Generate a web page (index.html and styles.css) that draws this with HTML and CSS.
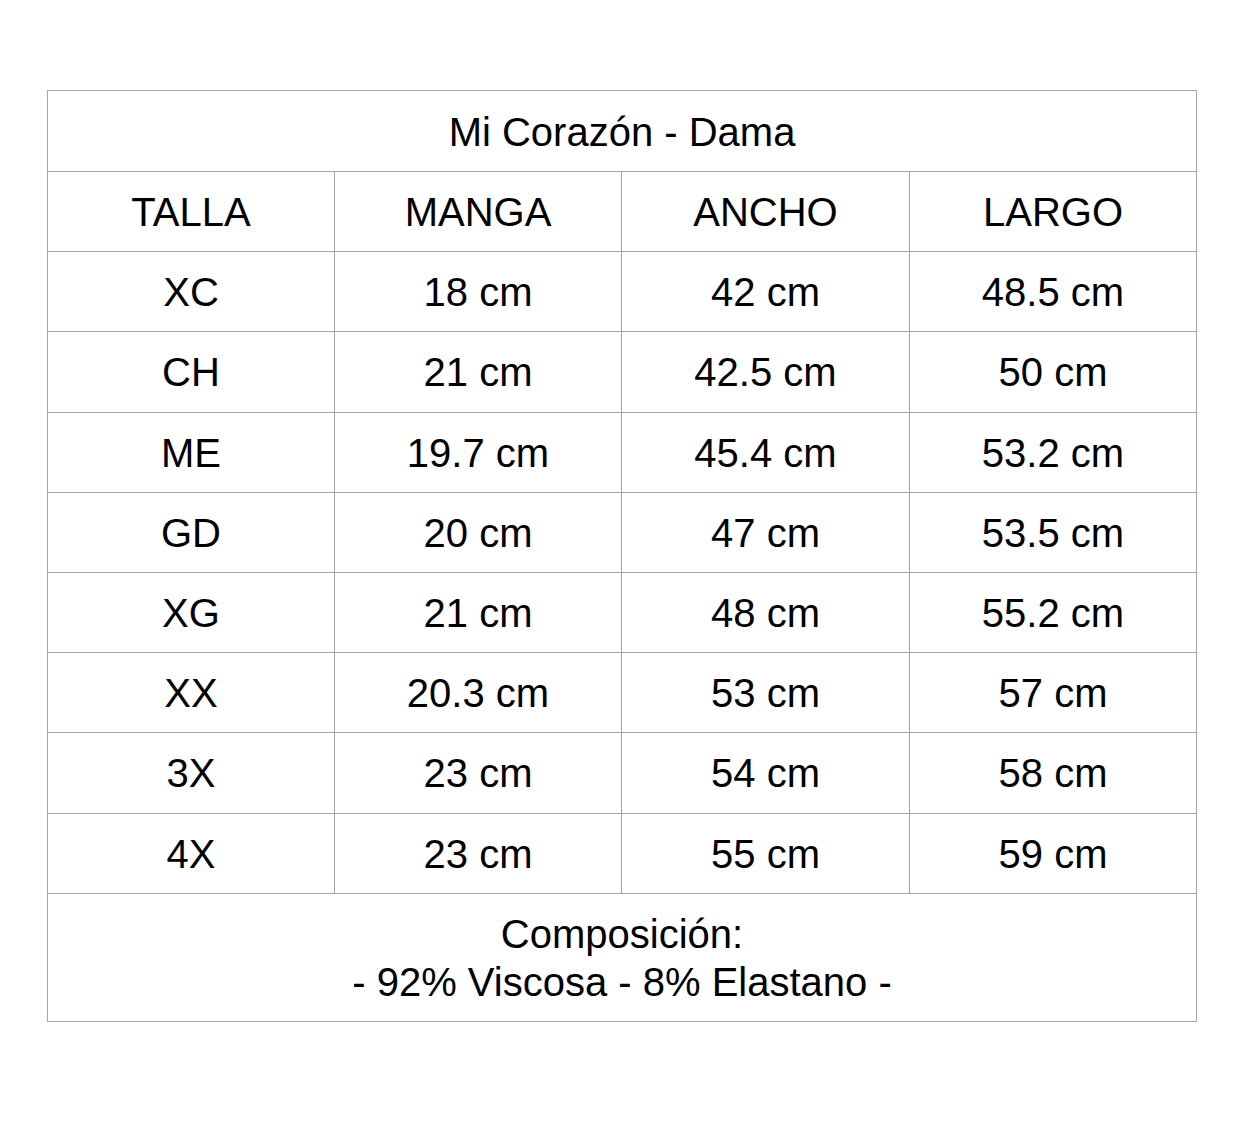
FILE: index.html
```html
<!DOCTYPE html>
<html lang="es">
<head>
<meta charset="utf-8">
<title>Mi Corazón - Dama</title>
<link rel="stylesheet" href="styles.css">
</head>
<body>
<div class="page">
<table class="sizes">
  <colgroup><col class="c1"><col class="c2"><col class="c3"><col class="c4"></colgroup>
  <tr class="title"><td colspan="4">Mi Corazón - Dama</td></tr>
  <tr class="row"><td>TALLA</td><td>MANGA</td><td>ANCHO</td><td>LARGO</td></tr>
  <tr class="row"><td>XC</td><td>18 cm</td><td>42 cm</td><td>48.5 cm</td></tr>
  <tr class="row"><td>CH</td><td>21 cm</td><td>42.5 cm</td><td>50 cm</td></tr>
  <tr class="row"><td>ME</td><td>19.7 cm</td><td>45.4 cm</td><td>53.2 cm</td></tr>
  <tr class="row"><td>GD</td><td>20 cm</td><td>47 cm</td><td>53.5 cm</td></tr>
  <tr class="row"><td>XG</td><td>21 cm</td><td>48 cm</td><td>55.2 cm</td></tr>
  <tr class="row"><td>XX</td><td>20.3 cm</td><td>53 cm</td><td>57 cm</td></tr>
  <tr class="row"><td>3X</td><td>23 cm</td><td>54 cm</td><td>58 cm</td></tr>
  <tr class="row"><td>4X</td><td>23 cm</td><td>55 cm</td><td>59 cm</td></tr>
  <tr class="foot"><td colspan="4">Composición:<br>- 92% Viscosa - 8% Elastano -</td></tr>
</table>
</div>
</body>
</html>
```
FILE: styles.css
```css
html, body {
  margin: 0;
  padding: 0;
  background: #ffffff;
}
.page {
  padding: 90px 0 0 47px;
}
.sizes {
  border-collapse: collapse;
  width: 1150px;
  table-layout: fixed;
  font-family: "Liberation Sans", Arial, Helvetica, sans-serif;
  font-size: 40px;
  color: #000;
}
.sizes .c1, .sizes .c2, .sizes .c4 {
  width: 287px;
}
.sizes .c3 {
  width: 288px;
}
.sizes td {
  border: 1px solid #a6a6a6;
  text-align: center;
  vertical-align: middle;
  padding: 1px 0 0 0;
  line-height: 48px;
}
.title td {
  height: 79px;
}
.row td {
  height: 78.2px;
}
.foot td {
  height: 126px;
}
```
